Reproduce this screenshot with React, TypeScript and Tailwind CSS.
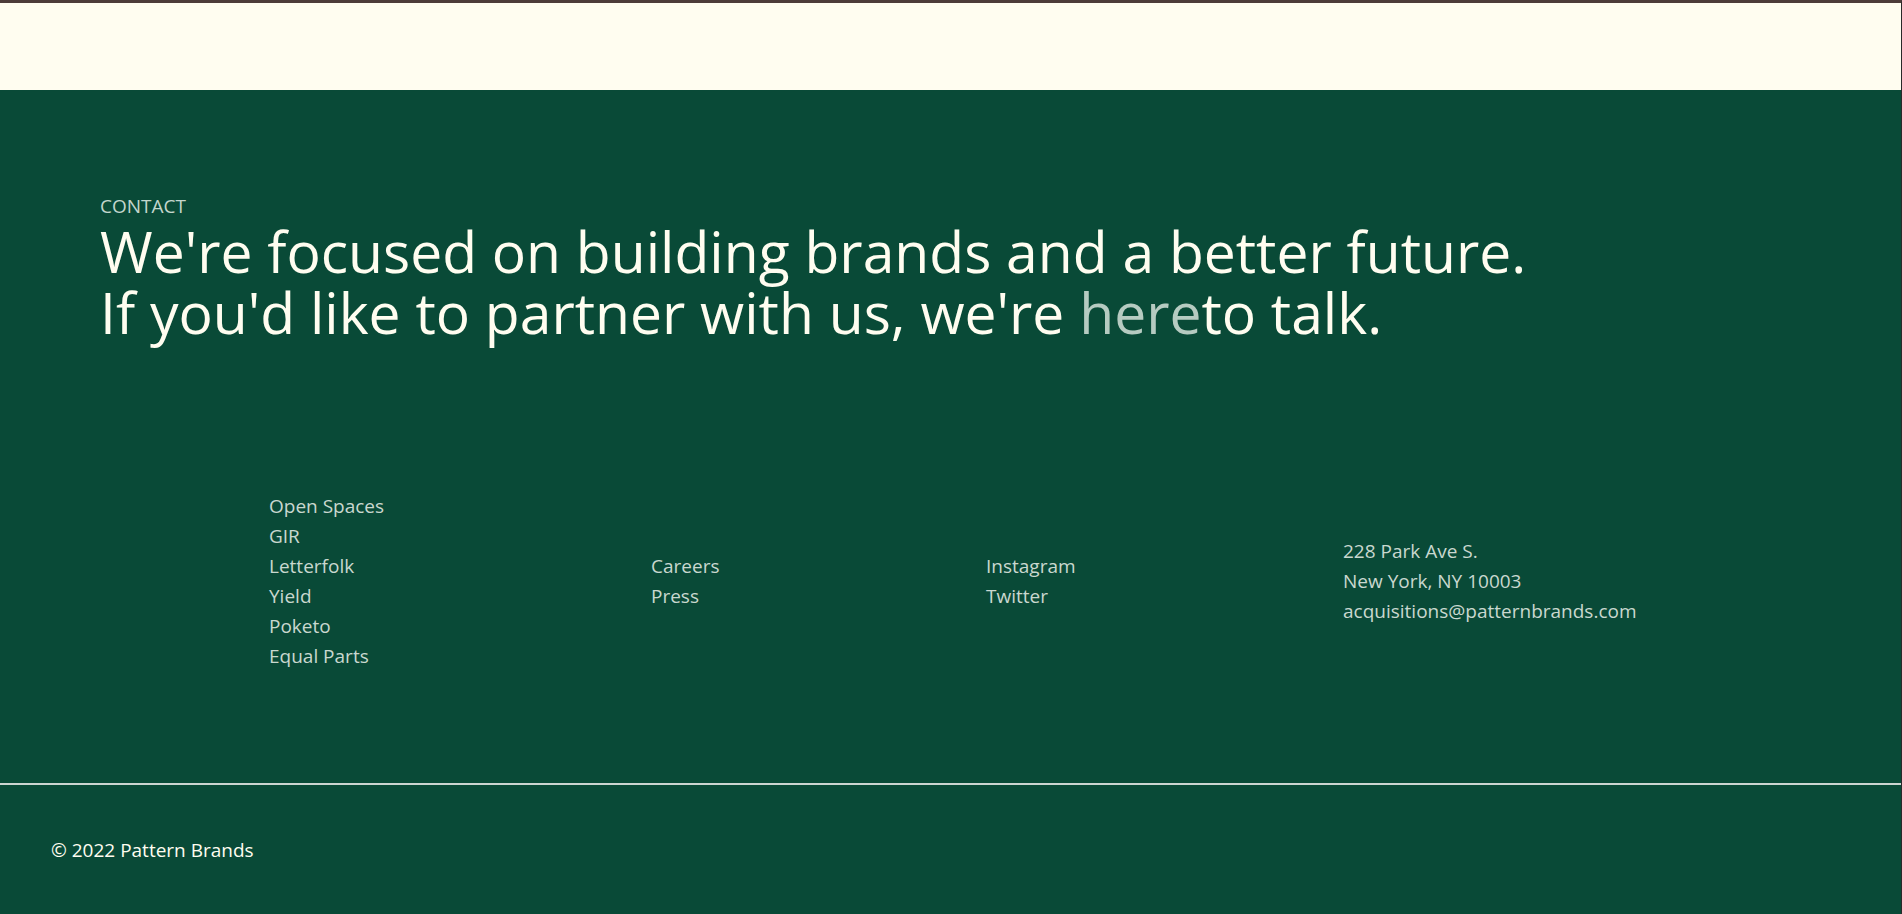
const brands = ['Open Spaces', 'GIR', 'Letterfolk', 'Yield', 'Poketo', 'Equal Parts'];
const company = ['Careers', 'Press'];
const social = ['Instagram', 'Twitter'];
const address = ['228 Park Ave S.', 'New York, NY 10003', 'acquisitions@patternbrands.com'];

function LinkList({ items, className }: { items: string[]; className?: string }) {
  return (
    <ul className={className}>
      {items.map((item) => (
        <li key={item} className="leading-[30px]">
          <a href="#" className="text-[#c9d8cf] hover:text-white">
            {item}
          </a>
        </li>
      ))}
    </ul>
  );
}

export default function App() {
  return (
    <div
      className="min-h-screen bg-[#094a37] border-t-[3px] border-r border-t-[#4d3c39] border-r-[#2a2a2a]"
      style={{ fontFamily: '"Open Sans", "Noto Sans", sans-serif' }}
    >
      {/* Header */}
      <header className="h-[87px] bg-[#fffdf0]" />

      {/* Contact */}
      <section className="px-[100px] pt-[104px]">
        <p className="text-[19px] leading-[24px] text-[#c3d6cc]">CONTACT</p>
        <h2 className="mt-[3px] text-[57px] leading-[61px] text-[#fffdf0] font-normal">
          We're focused on building brands and a better future.
          <br />
          If you'd like to partner with us, we're{' '}
          <a href="#" className="text-[#b6cbc1]">
            here
          </a>
          to talk.
        </h2>
      </section>

      {/* Links */}
      <nav className="mt-[148px] flex items-center pl-[269px] text-[19px]">
        <LinkList items={brands} className="w-[382px]" />
        <LinkList items={company} className="w-[335px]" />
        <LinkList items={social} className="w-[357px]" />
        <ul>
          {address.map((line) => (
            <li key={line} className="leading-[30px] text-[#c9d8cf]">
              {line}
            </li>
          ))}
        </ul>
      </nav>

      <hr className="mt-[112px] border-0 h-[2px] bg-[#cdd5d1]" />

      {/* Footer */}
      <footer className="px-[51px] pt-[53px] pb-[60px]">
        <p className="text-[19px] leading-[24px] text-[#fffdf0]">© 2022 Pattern Brands</p>
      </footer>
    </div>
  );
}
